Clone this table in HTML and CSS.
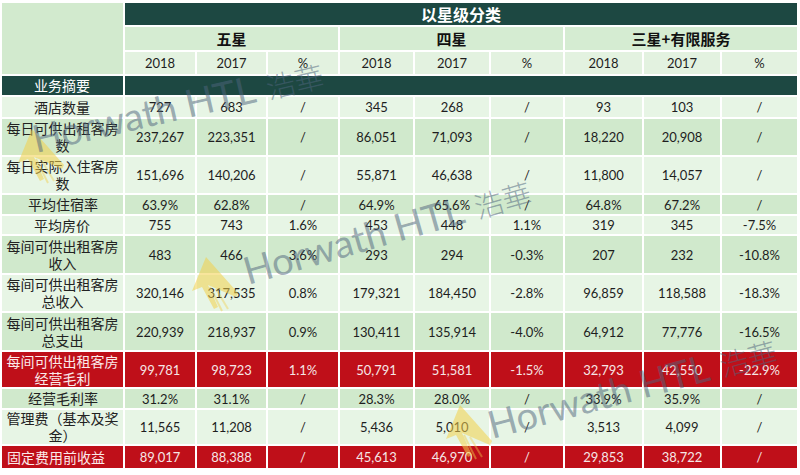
FILE: index.html
```html
<!DOCTYPE html>
<html lang="zh-CN">
<head>
<meta charset="utf-8">
<link rel="stylesheet" href="styles.css">
</head>
<body>
<div class="wrap">
<table class="tbl">
<colgroup>
<col class="c-label"><col class="c70"><col class="c69"><col class="c70"><col class="c73"><col class="c74"><col class="c72"><col class="c77"><col class="c76"><col class="c75">
</colgroup>
<tr class="h-title"><td class="corner" rowspan="3"></td><td class="title" colspan="9">以星级分类</td></tr>
<tr class="h-star"><td colspan="3">五星</td><td colspan="3">四星</td><td colspan="3">三星+有限服务</td></tr>
<tr class="h-year"><td>2018</td><td>2017</td><td>%</td><td>2018</td><td>2017</td><td>%</td><td>2018</td><td>2017</td><td>%</td></tr>
<tr class="r-dark"><td class="lab one n4">业务摘要</td><td colspan="9"></td></tr>
<tr class="r-l h20"><td class="lab one n4">酒店数量</td><td>727</td><td>683</td><td>/</td><td>345</td><td>268</td><td>/</td><td>93</td><td>103</td><td>/</td></tr>
<tr class="r-d h36"><td class="lab">每日可供出租客房数</td><td>237,267</td><td>223,351</td><td>/</td><td>86,051</td><td>71,093</td><td>/</td><td>18,220</td><td>20,908</td><td>/</td></tr>
<tr class="r-l h36"><td class="lab">每日实际入住客房数</td><td>151,696</td><td>140,206</td><td>/</td><td>55,871</td><td>46,638</td><td>/</td><td>11,800</td><td>14,057</td><td>/</td></tr>
<tr class="r-d h19"><td class="lab one n5">平均住宿率</td><td>63.9%</td><td>62.8%</td><td>/</td><td>64.9%</td><td>65.6%</td><td>/</td><td>64.8%</td><td>67.2%</td><td>/</td></tr>
<tr class="r-l h18"><td class="lab one n4">平均房价</td><td>755</td><td>743</td><td>1.6%</td><td>453</td><td>448</td><td>1.1%</td><td>319</td><td>345</td><td>-7.5%</td></tr>
<tr class="r-d h37"><td class="lab">每间可供出租客房收入</td><td>483</td><td>466</td><td>3.6%</td><td>293</td><td>294</td><td>-0.3%</td><td>207</td><td>232</td><td>-10.8%</td></tr>
<tr class="r-l h36"><td class="lab">每间可供出租客房总收入</td><td>320,146</td><td>317,535</td><td>0.8%</td><td>179,321</td><td>184,450</td><td>-2.8%</td><td>96,859</td><td>118,588</td><td>-18.3%</td></tr>
<tr class="r-d h37"><td class="lab">每间可供出租客房总支出</td><td>220,939</td><td>218,937</td><td>0.9%</td><td>130,411</td><td>135,914</td><td>-4.0%</td><td>64,912</td><td>77,776</td><td>-16.5%</td></tr>
<tr class="r-red h35"><td class="lab">每间可供出租客房经营毛利</td><td>99,781</td><td>98,723</td><td>1.1%</td><td>50,791</td><td>51,581</td><td>-1.5%</td><td>32,793</td><td>42,550</td><td>-22.9%</td></tr>
<tr class="r-d h19"><td class="lab one n5">经营毛利率</td><td>31.2%</td><td>31.1%</td><td>/</td><td>28.3%</td><td>28.0%</td><td>/</td><td>33.9%</td><td>35.9%</td><td>/</td></tr>
<tr class="r-l h34"><td class="lab">管理费（基本及奖金）</td><td>11,565</td><td>11,208</td><td>/</td><td>5,436</td><td>5,010</td><td>/</td><td>3,513</td><td>4,099</td><td>/</td></tr>
<tr class="r-red h22"><td class="lab one lab-left">固定费用前收益</td><td>89,017</td><td>88,388</td><td>/</td><td>45,613</td><td>46,970</td><td>/</td><td>29,853</td><td>38,722</td><td>/</td></tr>
</table>

<div class="wm wm1"><svg class="arrow" width="50" height="55" viewBox="0 0 50 55"><polygon points="14,0 0,34 10,30 22,52 26,50 16,28 44,40 46,36" fill="#f2cf4a" opacity="0.55"/><line x1="18" y1="30" x2="30" y2="54" stroke="#f2cf4a" stroke-width="2" opacity="0.45"/><line x1="24" y1="32" x2="36" y2="52" stroke="#f2cf4a" stroke-width="2" opacity="0.4"/></svg></div>
<div class="wm wm2"><svg class="arrow" width="50" height="55" viewBox="0 0 50 55"><polygon points="14,0 0,34 10,30 22,52 26,50 16,28 44,40 46,36" fill="#f2cf4a" opacity="0.55"/><line x1="18" y1="30" x2="30" y2="54" stroke="#f2cf4a" stroke-width="2" opacity="0.45"/><line x1="24" y1="32" x2="36" y2="52" stroke="#f2cf4a" stroke-width="2" opacity="0.4"/></svg></div>
<div class="wm wm3"><svg class="arrow" width="50" height="55" viewBox="0 0 50 55"><polygon points="14,0 0,34 10,30 22,52 26,50 16,28 44,40 46,36" fill="#f2cf4a" opacity="0.55"/><line x1="18" y1="30" x2="30" y2="54" stroke="#f2cf4a" stroke-width="2" opacity="0.45"/><line x1="24" y1="32" x2="36" y2="52" stroke="#f2cf4a" stroke-width="2" opacity="0.4"/></svg></div>

<div class="wmt wmt1">Horwath HTL <span class="cjk">浩華</span></div>
<div class="wmt wmt2">Horwath HTL <span class="cjk">浩華</span></div>
<div class="wmt wmt3">Horwath HTL <span class="cjk">浩華</span></div>
</div>
</body>
</html>
```
FILE: styles.css
```css
html, body { margin: 0; padding: 0; background: #fff; }
body { width: 800px; height: 475px; overflow: hidden; font-family: "Noto Sans CJK SC", sans-serif; }
.wrap { position: relative; width: 800px; height: 475px; }
.tbl {
  margin: 1px 0 0 0;
  width: 799px;
  table-layout: fixed;
  border-collapse: separate;
  border-spacing: 2px;
  font-family: Lato, "Noto Sans CJK SC", sans-serif;
  font-size: 13px;
  color: #1e1e1e;
}
.c-label { width: 121px; }
.c70 { width: 70px; } .c69 { width: 69px; } .c73 { width: 73px; } .c74 { width: 74px; }
.c72 { width: 72px; } .c77 { width: 77px; } .c76 { width: 76px; } .c75 { width: 75px; }
.tbl td { padding: 0; text-align: center; vertical-align: middle; }
.h-title td { height: 22px; }
.corner { background: #d2eace; }
.title { background: #1d4842; color: #fff; font-family: "Noto Sans CJK SC", sans-serif; font-weight: 700; font-size: 16px; line-height: 18px; }
.h-star td { height: 23px; background: #d5ecd2; font-family: "Noto Sans CJK SC", sans-serif; font-weight: 700; font-size: 15px; color: #111; }
.h-year td { height: 22px; background: #e3f2e0; }
.r-dark td { height: 19px; background: #1d4842; color: #fff; }
.tbl td.lab {
  font-family: "Noto Sans CJK SC", sans-serif;
  font-size: 14px;
  line-height: 17px;
  color: #222;
  text-align: center;
}
.tbl td.one { white-space: nowrap; text-align: left; }
.tbl td.n4 { padding-left: 32px; }
.tbl td.n5 { padding-left: 26px; }
.tbl .r-dark td.lab { color: #fff; }
.r-l td { background: #e7f5e5; }
.r-d td { background: #d0e9cc; }
.r-red td { background: #bf0f19; color: #f6e6e6; }
.tbl .r-red td.lab { color: #fbeaea; }
.tbl td.lab-left { padding-left: 5px; }
.h18 td { height: 18px; } .h19 td { height: 19px; } .h20 td { height: 20px; }
.h22 td { height: 22px; } .h34 td { height: 34px; } .h35 td { height: 35px; }
.h36 td { height: 36px; } .h37 td { height: 37px; }

.wm { position: absolute; pointer-events: none; }
.wm1 { left: 18px; top: 128px; }
.wm2 { left: 192px; top: 256px; }
.wm3 { left: 446px; top: 404px; }

.wmt {
  position: absolute;
  font-family: Lato, "Noto Sans CJK SC", sans-serif;
  font-size: 38px;
  line-height: 38px;
  white-space: nowrap;
  color: rgba(78, 100, 124, 0.52);
  transform-origin: 0 34px;
  pointer-events: none;
}
.wmt .cjk { font-size: 29px; font-family: "Noto Sans CJK SC", sans-serif; font-weight: 300; margin-left: 3px; }
.wmt1 { left: 36px; top: 118px; transform: rotate(-13deg); }
.wmt2 { left: 248px; top: 250px; transform: rotate(-16deg); }
.wmt3 { left: 492px; top: 404px; transform: rotate(-15deg); }
```
